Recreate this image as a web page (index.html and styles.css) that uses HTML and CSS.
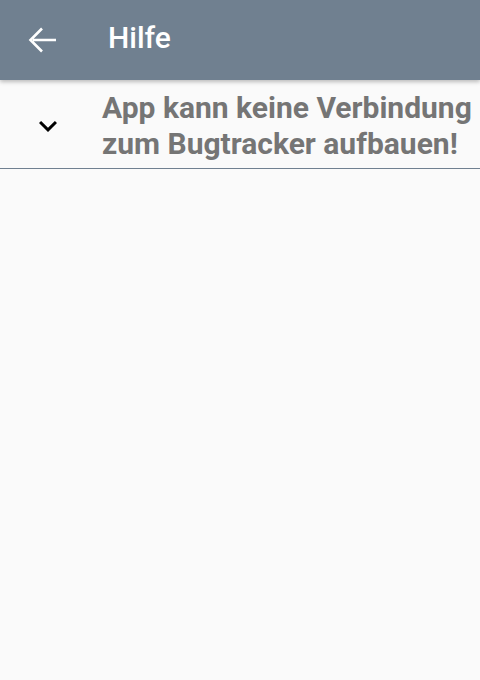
FILE: index.html
```html
<!DOCTYPE html>
<html>
<head>
<meta charset="utf-8">
<link rel="stylesheet" href="styles.css">
</head>
<body>
<header class="appbar">
  <button class="back" aria-label="Zurück">
    <svg width="36" height="36" viewBox="0 0 36 36"><path d="M34 18H11M20 6.5L8.5 18L20 29.5" fill="none" stroke="#fff" stroke-width="2.6"/></svg>
  </button>
  <h1 class="title">Hilfe</h1>
</header>
<main class="content">
  <div class="item">
    <div class="chev">
      <svg width="36" height="36" viewBox="0 0 24 24"><path d="M7.41 8.59L12 13.17l4.59-4.58L18 10l-6 6-6-6 1.41-1.41z" fill="#000"/></svg>
    </div>
    <div class="question">App kann keine Verbindung zum Bugtracker aufbauen!</div>
  </div>
</main>
</body>
</html>
```

FILE: styles.css
```css
html, body {
  margin: 0;
  padding: 0;
  background: #fafafa;
  font-family: Roboto, "Noto Sans", sans-serif;
}
.appbar {
  height: 80px;
  background: #708090;
  display: flex;
  align-items: center;
  box-shadow: 0 2px 4px rgba(0,0,0,0.25);
  position: relative;
  z-index: 1;
}
.back {
  background: none;
  border: 0;
  padding: 0;
  margin-left: 22px;
  width: 36px;
  height: 36px;
  display: flex;
}
.title {
  margin: 0 0 4px 50px;
  color: #fff;
  font-size: 30px;
  font-weight: 500;
  line-height: 36px;
}
.item {
  display: flex;
  align-items: center;
  border-bottom: 1px solid #708090;
  padding: 10px 0 6px;
}
.chev {
  width: 102px;
  display: flex;
  box-sizing: border-box;
  padding-left: 30px;
}
.question {
  flex: 1;
  color: #757575;
  font-size: 30px;
  font-weight: 700;
  line-height: 36px;
}
```
